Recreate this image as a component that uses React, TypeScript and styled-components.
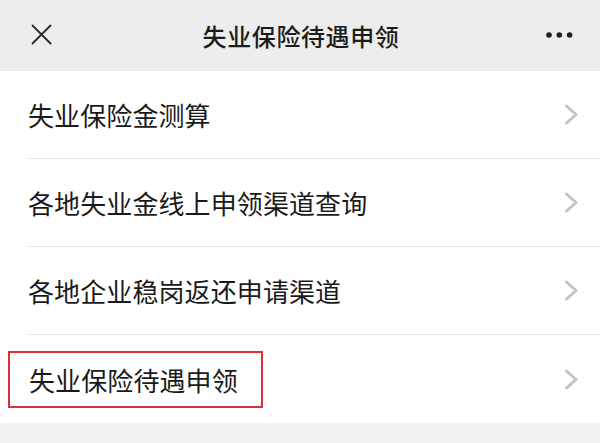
import React from "react";
import styled, { createGlobalStyle } from "styled-components";

const GlobalStyle = createGlobalStyle`
  html, body {
    margin: 0;
    padding: 0;
    background: #f1f1f1;
    font-family: "Noto Sans CJK SC", "Noto Sans", sans-serif;
  }
`;

const Page = styled.div`
  width: 600px;
  height: 443px;
  overflow: hidden;
  background: #f1f1f1;
`;

const Header = styled.header`
  height: 71px;
  display: grid;
  grid-template-columns: 1fr auto 1fr;
  align-items: center;
  padding: 0 27px 0 31px;
  background: #ededed;
`;

const IconButton = styled.button<{ $align: "start" | "end" }>`
  justify-self: ${(p) => p.$align};
  display: flex;
  align-items: center;
  border: none;
  background: none;
  padding: 0;
  margin-top: -2px;
`;

const Title = styled.h1`
  margin: 0 0 0 -2px;
  font-size: 24px;
  font-weight: 500;
  letter-spacing: 0.6px;
  color: #1c1c1c;
`;

const List = styled.ul`
  list-style: none;
  margin: 0;
  padding: 0;
  background: #fff;
`;

const Row = styled.li<{ $last?: boolean }>`
  height: 88px;
  box-sizing: border-box;
  margin-left: 28px;
  padding-right: 21px;
  display: flex;
  align-items: center;
  justify-content: space-between;
  border-bottom: ${(p) => (p.$last ? "none" : "1.5px solid #e4e4e4")};
`;

const Label = styled.span`
  font-size: 26px;
  color: #1a1a1a;
  letter-spacing: 0.1px;
`;

const Highlight = styled.span`
  display: flex;
  align-items: center;
  height: 57px;
  box-sizing: border-box;
  margin-left: -20px;
  padding: 0 23px 0 19px;
  border: 2px solid #d9303a;
`;

const Chevron = () => (
  <svg width="15" height="21" viewBox="0 0 15 21" fill="none">
    <polyline
      points="2.5,2 12,10.5 2.5,19"
      stroke="#c2c2c2"
      strokeWidth="3"
      strokeLinecap="round"
      strokeLinejoin="round"
    />
  </svg>
);

const CloseIcon = () => (
  <svg width="21" height="21" viewBox="0 0 21 21" fill="none">
    <path d="M1.5 1.5 L19.5 19.5 M19.5 1.5 L1.5 19.5" stroke="#2a2a2a" strokeWidth="1.8" strokeLinecap="round" />
  </svg>
);

const MoreIcon = () => (
  <svg width="27" height="6" viewBox="0 0 27 6" fill="#1f1f1f">
    <circle cx="3" cy="3" r="2.8" />
    <circle cx="13.3" cy="3" r="2.8" />
    <circle cx="23.6" cy="3" r="2.8" />
  </svg>
);

const items = [
  "失业保险金测算",
  "各地失业金线上申领渠道查询",
  "各地企业稳岗返还申请渠道",
  "失业保险待遇申领",
];

export default function App() {
  return (
    <Page>
      <GlobalStyle />
      <Header>
        <IconButton $align="start" aria-label="关闭">
          <CloseIcon />
        </IconButton>
        <Title>失业保险待遇申领</Title>
        <IconButton $align="end" aria-label="更多">
          <MoreIcon />
        </IconButton>
      </Header>
      <List>
        {items.map((text, i) => {
          const last = i === items.length - 1;
          return (
            <Row key={text} $last={last}>
              {last ? (
                <Highlight>
                  <Label>{text}</Label>
                </Highlight>
              ) : (
                <Label>{text}</Label>
              )}
              <Chevron />
            </Row>
          );
        })}
      </List>
    </Page>
  );
}
